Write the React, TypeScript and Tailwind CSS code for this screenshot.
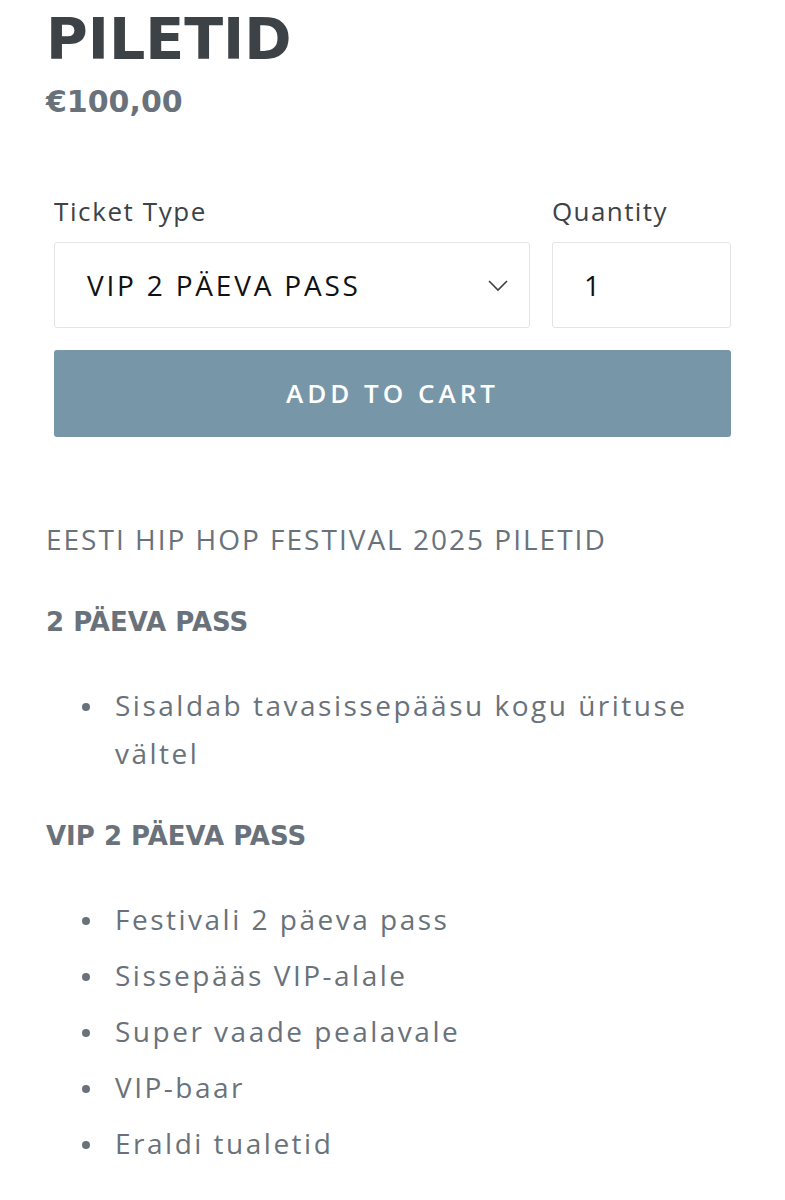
import React from 'react';

const font = { fontFamily: '"Open Sans", "Noto Sans", sans-serif' };
const heavy = { fontFamily: '"DejaVu Sans", "Open Sans", sans-serif' };

function Chevron() {
    return <svg width="22" height="14" viewBox="0 0 22 14" fill="none" stroke="#3d4246" strokeWidth="1.6">
        <path d="M2 3l9 9 9-9" />
    </svg>;
}

function Bullet({ children }: { children: React.ReactNode }) {
    return <li className="flex items-start">
        <span className="h-[48px] w-[69px] shrink-0 flex items-center pl-[36px] pt-[3px]">
            <span className="block w-[8px] h-[8px] rounded-full bg-[#69727b]" />
        </span>
        <span className="leading-[48px]">{children}</span>
    </li>;
}

export default function App(): JSX.Element {
    const vipItems = ['Festivali 2 päeva pass', 'Sissepääs VIP-alale', 'Super vaade pealavale', 'VIP-baar', 'Eraldi tualetid'];

    return <div className="bg-white w-[785px] min-h-[1200px] px-[46px] pt-[11px]" style={font}>
        <h1 className="text-[57px] font-bold leading-[57px] text-[#3d4246]" style={heavy}>PILETID</h1>
        <div className="text-[30px] font-bold text-[#69727b] leading-[40px] mt-[14px]" style={heavy}>€100,00</div>

        <div className="flex gap-[22px] px-[8px] mt-[74px]">
            <div className="flex flex-col w-[476px]">
                <label className="text-[26px] text-[#3d4246] leading-[30px] mb-[16px] tracking-[1.6px]">Ticket Type</label>
                <div className="h-[86px] border border-[#e3e4e6] rounded-[3px] flex items-center justify-between pl-[32px] pr-[20px]">
                    <span className="text-[28px] text-[#111] tracking-[2.8px]">VIP 2 PÄEVA PASS</span>
                    <Chevron />
                </div>
            </div>
            <div className="flex flex-col flex-1">
                <label className="text-[26px] text-[#3d4246] leading-[30px] mb-[16px] tracking-[1.4px]">Quantity</label>
                <div className="h-[86px] border border-[#e3e4e6] rounded-[3px] flex items-center pl-[31px]">
                    <span className="text-[28px] text-[#111]">1</span>
                </div>
            </div>
        </div>

        <div className="px-[8px] mt-[22px]">
            <button className="w-full h-[87px] bg-[#7796a8] rounded-[3px] text-white text-[26px] font-semibold tracking-[4px]">ADD TO CART</button>
        </div>

        <div className="text-[#69727b] text-[28px] mt-[78px] tracking-[2.5px]">
            <p className="leading-[48px] tracking-[2px]">EESTI HIP HOP FESTIVAL 2025 PILETID</p>
            <p className="font-bold text-[26px] leading-[48px] mt-[35px] tracking-normal" style={heavy}>2 PÄEVA PASS</p>
            <ul className="mt-[35px]">
                <Bullet>Sisaldab tavasissepääsu kogu ürituse vältel</Bullet>
            </ul>
            <p className="font-bold text-[26px] leading-[48px] mt-[35px] tracking-normal" style={heavy}>VIP 2 PÄEVA PASS</p>
            <ul className="mt-[35px] flex flex-col gap-[8px]">
                {vipItems.map(item => <Bullet key={item}>{item}</Bullet>)}
            </ul>
        </div>
    </div>;
}
